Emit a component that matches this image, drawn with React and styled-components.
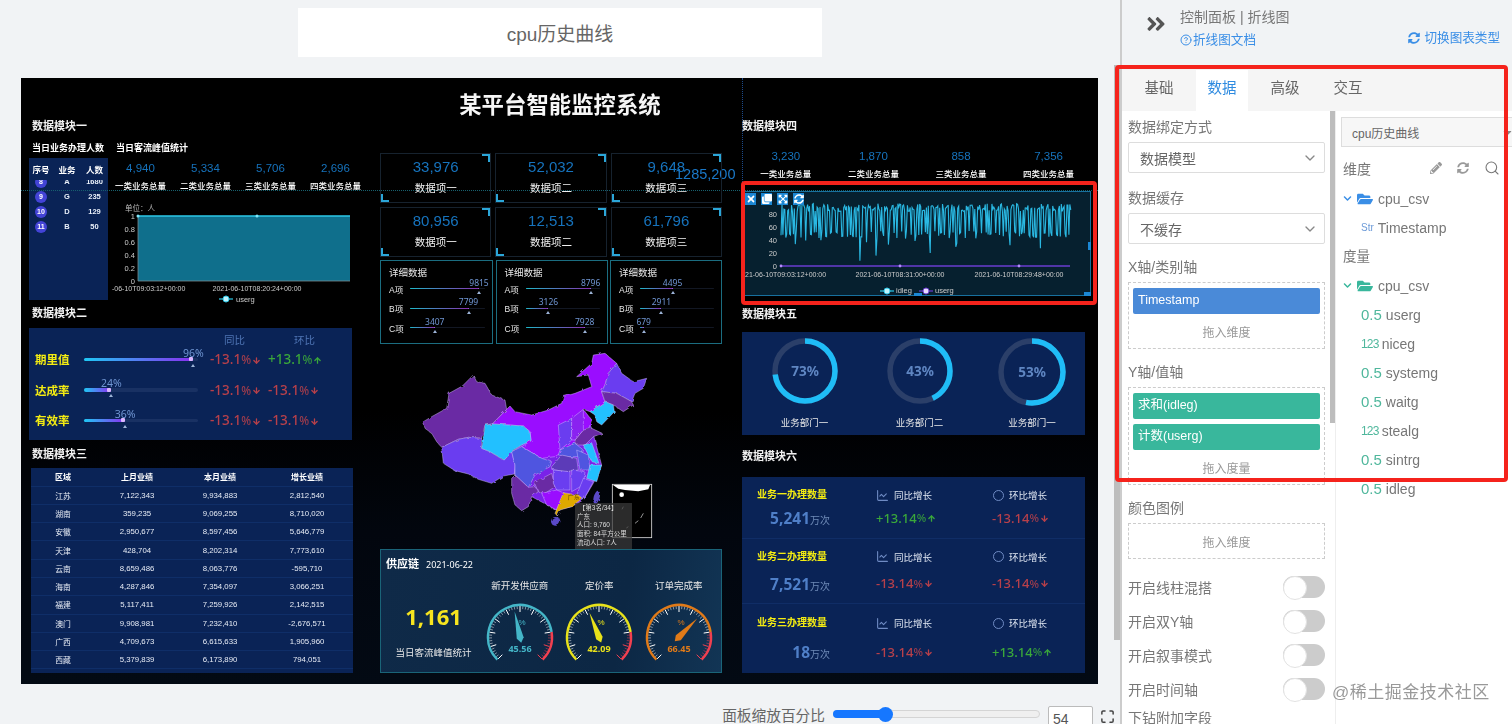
import React from "react";
import styled, { createGlobalStyle } from "styled-components";
import { ArrowDown, ArrowUp, ChartLine, ChevronDown, CircleHelp, Maximize, Search } from "lucide-react";
import { FaAngleDoubleRight, FaChevronDown, FaClone, FaExpandArrowsAlt, FaFolderOpen, FaPencilAlt, FaSyncAlt, FaTimes, FaCaretDown } from "react-icons/fa";

const Global = createGlobalStyle`
  html, body { margin: 0; padding: 0; background: #f1f3f5; }
  body { font-family: "Liberation Sans", "Noto Sans CJK SC", sans-serif; }
  * { box-sizing: border-box; }
`;

const Root = styled.div`
  position: relative; display: flex; width: 1512px; height: 724px; overflow: hidden; background: #f1f3f5;
`;
const Main = styled.div`
  width: 1120px; flex: none; padding-left: 21px; display: flex; flex-direction: column;
`;
const TitleBar = styled.div`
  flex: none; width: 524px; height: 49px; margin: 8px 0 21px 277px; background: #fff;
  display: flex; align-items: center; justify-content: center; color: #666; font-size: 19px;
`;
const Canvas = styled.div`
  position: relative; flex: none; width: 1077px; height: 606px; overflow: hidden;
  background: linear-gradient(#000 0 55%, #02060e 75%, #030a14 100%);
  color: #fff; display: grid; grid-template-columns: 323px 369px 1fr;
  padding-left: 9px; filter: blur(0.35px);
`;
const GuideH = styled.div`
  position: absolute; left: 0; right: 0; top: 112px; border-top: 1px dotted #17606e;
`;
const GuideV = styled.div`
  position: absolute; left: 721px; top: 0; height: 112px; border-left: 1px dotted #1c4a8a;
`;
const GuideLabel = styled.div`
  position: absolute; left: 654px; top: 88px; color: #1a78c8; font-size: 14.5px;
`;
const Column = styled.div`
  display: flex; flex-direction: column; padding-top: 40px; min-width: 0;
`;
const MidColumn = styled(Column)`
  margin-left: 27px; padding-top: 10px; width: 342px;
`;
const RightColumn = styled(Column)`
  margin-left: 20px; width: 343px;
`;
const Heading = styled.div`
  flex: none; height: 16px; line-height: 16px; font-size: 11px; font-weight: 700; color: #f2f2f2;
  margin-top: ${(p) => p.$mt || 0}px; padding-left: ${(p) => p.$pl || 0}px;
`;
const SubRow = styled.div`
  display: flex; gap: 12px; margin-top: 6px; height: 16px; line-height: 16px; font-size: 9px; font-weight: 700; padding-left: 2px;
`;
const TopRow = styled.div`
  display: flex; margin: 2px 0 0 -1px; height: 142px; width: 324px;
`;
const MiniTable = styled.div`
  width: 79px; flex: none; background: #0a2356; overflow: hidden;
`;
const MiniRowBase = styled.div`
  display: grid; grid-template-columns: 24px 28px 27px; align-items: center; justify-items: center;
`;
const MiniHead = styled(MiniRowBase)`
  height: 22px; font-size: 8.5px; font-weight: 700; background: #0a2356; position: relative; z-index: 1;
`;
const MiniRow = styled(MiniRowBase)`
  height: 15px; font-size: 7.5px; font-weight: 700; color: #e8eef8;
`;
const MiniBody = styled.div`
  margin-top: -6px;
`;
const Badge = styled.span`
  width: 12px; height: 12px; border-radius: 50%; background: #4343d6; color: #fff; display: flex; align-items: center; justify-content: center; font-size: 7px;
`;
const TopRight = styled.div`
  flex: 1; min-width: 0; display: flex; flex-direction: column;
`;
const AreaSvg = styled.svg`
  display: block; flex: none; margin-top: 1px;
`;
const Stats = styled.div`
  display: grid; grid-template-columns: repeat(4, ${(p) => p.$w}px); flex: none;
  margin-top: ${(p) => p.$mt || 0}px;
`;
const Stat = styled.div`
  text-align: center; display: flex; flex-direction: column; align-items: center;
`;
const StatNum = styled.span`
  font-size: 11.5px; line-height: 16px; color: #1673bd;
`;
const StatLabel = styled.span`
  margin-top: 3px; font-size: 8.5px; line-height: 14px; white-space: nowrap; color: #fff; font-weight: 500;
`;
const DarkPanel = styled.div`
  flex: none; background: #0a2356; margin-top: ${(p) => p.$mt || 0}px; width: ${(p) => p.$w || 343}px; height: ${(p) => p.$h}px;
  margin-left: ${(p) => p.$ml || 0}px;
`;
const RateGrid = styled.div`
  display: grid; grid-template-columns: 49px 114px 70px 1fr; align-items: center; padding-left: 6px;
`;
const RateHead = styled(RateGrid)`
  height: 20px; padding-top: 2px; margin-bottom: -4px; color: #4f74b4; font-size: 10.5px;
  & > span:nth-child(3), & > span:nth-child(4) { padding-left: 26px; }
`;
const RateRow = styled(RateGrid)`
  height: 30.5px;
`;
const RateName = styled.span`
  color: #f4ec12; font-size: 11.5px; font-weight: 700;
`;
const DeltaSlot = styled.span`
  padding-left: ${(p) => p.$pl || 0}px;
`;
const TrackWrap = styled.div`
  position: relative; height: ${(p) => p.$t}px; background: rgba(70, 90, 140, 0.25); border-radius: 2px;
`;
const TrackFill = styled.div`
  position: absolute; left: 0; top: 0; bottom: 0; width: ${(p) => p.$pct}%; border-radius: 2px;
  background: linear-gradient(90deg, ${(p) => p.$from}, ${(p) => p.$to});
  &::after {
    content: ""; position: absolute; right: 0; top: 50%; width: ${(p) => p.$dot}px; height: ${(p) => p.$dot}px;
    margin-top: -${(p) => p.$dot / 2}px; border-radius: 1px; background: ${(p) => p.$dotColor};
  }
`;
const TrackValue = styled.span`
  position: absolute; left: ${(p) => p.$pct}%; bottom: ${(p) => p.$b}px; transform: translateX(-50%);
  color: #6f95d2; font-size: ${(p) => p.$fs}px; line-height: 1; white-space: nowrap; font-family: "Noto Sans", sans-serif;
`;
const TrackMark = styled.span`
  position: absolute; left: ${(p) => p.$pct}%; top: ${(p) => p.$t}px; margin-left: -2px; width: 0; height: 0;
  border-left: 2.5px solid transparent; border-right: 2.5px solid transparent; border-bottom: 3px solid #9db4d8;
`;
const DeltaText = styled.span`
  display: inline-flex; align-items: center; color: ${(p) => (p.$up ? "#3aa83a" : "#b8404a")};
  font-family: "Noto Sans", sans-serif; font-weight: 500; font-size: ${(p) => p.$fs}px; line-height: 1; white-space: nowrap;
  small { font-size: 0.86em; opacity: 0.85; }
  svg { margin-left: 1px; }
`;
const TableWrap = styled.div`
  flex: none; width: 322px; height: 205px; margin: 6px 0 0 1px; background: #0a2356;
`;
const TableRow = styled.div`
  display: grid; grid-template-columns: 64px 84px 82px 92px; height: ${(p) => (p.$head ? 18.5 : 18.3)}px;
  align-items: center; justify-items: center; font-size: ${(p) => (p.$head ? 8 : 7.8)}px;
  font-weight: ${(p) => (p.$head ? 700 : 400)}; color: ${(p) => (p.$head ? "#fff" : "#e6ebf5")};
  border-bottom: 1px solid #0f2e68;
`;
const Title = styled.div`
  flex: none; height: 36px; line-height: 36px; padding-left: 18px; text-align: center; font-size: 22.4px; font-weight: 700; color: #f6f6f6;
`;
const CardGrid = styled.div`
  display: grid; grid-template-columns: repeat(3, 1fr); column-gap: 4px; row-gap: 4px; margin-top: 29px;
`;
const Card = styled.div`
  position: relative; height: 50px; border: 1px solid #16222e; text-align: center; padding-top: 4px;
  &::before {
    content: ""; position: absolute; right: 0; top: 0; width: 6px; height: 6px; border-top: 2px solid #2ba6d8; border-right: 2px solid #2ba6d8;
  }
  &::after {
    content: ""; position: absolute; left: 0; bottom: 0; width: 6px; height: 6px; border-bottom: 2px solid #2ba6d8; border-left: 2px solid #2ba6d8;
  }
`;
const CardNum = styled.div`
  font-size: 15px; line-height: 18px; color: #1673bd;
`;
const CardLabel = styled.div`
  font-size: 10.5px; line-height: 16px; margin-top: 4px; color: #f0f0f0;
`;
const DetailGrid = styled.div`
  display: grid; grid-template-columns: 113px 112px 112px; column-gap: 2.5px; margin-top: 3px;
`;
const Detail = styled.div`
  height: 84px; border: 1px solid #1b6d80; padding: 6px 7px 0 8px;
`;
const DetailTitle = styled.div`
  font-size: 9.5px; line-height: 12px; color: #e8e8e8;
`;
const DetailRow = styled.div`
  display: grid; grid-template-columns: 21px 1fr; align-items: center; height: 19.5px; font-size: 8.5px; color: #e8e8e8;
`;
const MapWrap = styled.div`
  position: relative; flex: none; height: 194px; margin-top: 6px;
`;
const MapSvg = styled.svg`
  display: block; width: 342px; height: 194px;
`;
const Tip = styled.div`
  position: absolute; left: 195px; top: 153px; width: 57px; height: 46px; overflow: hidden; background: rgba(60, 60, 60, 0.72);
  color: #ddd; font-size: 6.5px; line-height: 8.7px; padding: 1px 2px; white-space: nowrap;
`;
const Supply = styled.div`
  position: relative; flex: none; width: 342px; height: 124px; margin-top: 5px;
  background: linear-gradient(100deg, #0f2a48, #0c2744 70%, #123555);
  border: 1px solid #1a6478;
`;
const SupplyHead = styled.div`
  display: flex; align-items: baseline; gap: 7px; height: 25px; padding: 5px 0 0 5px;
  font-size: 11px; font-weight: 700;
  span { font-size: 9px; font-weight: 400; font-family: "Noto Sans", sans-serif; }
`;
const SupplyBody = styled.div`
  display: grid; grid-template-columns: 99px repeat(3, 79.5px);
`;
const BigStat = styled.div`
  display: flex; flex-direction: column; align-items: center; padding: 26px 0 0 6px;
`;
const BigNum = styled.div`
  color: #f7e51f; font-family: "Noto Sans", sans-serif; font-weight: 700; font-size: 22px; line-height: 30px;
`;
const BigLabel = styled.div`
  margin-top: 15px; font-size: 9.5px; line-height: 14px; white-space: nowrap; color: #e8e8e8;
`;
const GaugeCell = styled.div`
  display: flex; flex-direction: column; align-items: center;
`;
const GaugeLabel = styled.div`
  height: 22px; line-height: 22px; font-size: 9.5px; color: #e8e8e8; white-space: nowrap;
`;
const ChartBox = styled.div`
  position: relative; flex: none; width: 348px; height: 105px; margin: 10px 0 0 1px;
  background: #06202f; border: 1px solid #17709e;
`;
const ChartSvg = styled.svg`
  display: block; position: absolute; left: -1px; top: -1px; width: 348px; height: 105px;
`;
const ToolRow = styled.div`
  position: absolute; left: 1px; top: 1px; display: flex; gap: 5px; z-index: 1;
`;
const ToolBtn = styled.span`
  width: 11px; height: 12px; background: #1b87d4; color: #fff; display: flex; align-items: center; justify-content: center;
`;
const Handle = styled.span`
  position: absolute; background: #1b87d4; width: ${(p) => p.$w}px; height: ${(p) => p.$h}px;
  ${(p) => p.$pos}
`;
const Highlight = styled.div`
  position: absolute; border: 4px solid #f5231c; border-radius: 4px; pointer-events: none; z-index: 3;
  left: ${(p) => p.$l}px; top: ${(p) => p.$t}px; width: ${(p) => p.$w}px; height: ${(p) => p.$h}px;
`;
const DonutGrid = styled.div`
  display: grid; grid-template-columns: 115px 115px 110px; padding: 6px 0 0 5px;
`;
const DonutCell = styled.div`
  display: flex; flex-direction: column; align-items: center; height: 92px;
`;
const DonutLabel = styled.div`
  margin-top: auto; font-size: 9.5px; line-height: 14px; color: #e8e8e8;
`;
const BizRow = styled.div`
  display: grid; grid-template-columns: 134px 116px 1fr; align-content: center; row-gap: ${(p) => p.$gap}px;
  height: ${(p) => p.$h}px; border-bottom: ${(p) => (p.$last ? 0 : "1px solid #102d66")};
`;
const BizName = styled.div`
  padding-left: 15px; height: 16px; line-height: 16px; color: #f4ec12; font-weight: 700; font-size: 10px; white-space: nowrap;
`;
const BizNum = styled.div`
  width: 88px; height: 20px; text-align: right; white-space: nowrap; color: #4f7fc8; font-family: "Noto Sans", sans-serif; font-weight: 700; font-size: 15.5px; line-height: 20px;
  small { font-family: "Liberation Sans", "Noto Sans CJK SC", sans-serif; font-weight: 400; font-size: 10px; color: #6f8bb8; }
`;
const BizHead = styled.div`
  display: flex; align-items: center; gap: ${(p) => p.$gap}px; height: 16px; font-size: 9.5px; color: #dfe6f2; margin-left: ${(p) => p.$ml || 0}px;
`;
const Ring = styled.span`
  width: 11px; height: 11px; border-radius: 50%; border: 1.5px solid #6f8bc4; flex: none;
`;
const DeltaCell = styled.div`
  height: 20px; display: flex; align-items: center;
`;
const BottomRow = styled.div`
  flex: 1; display: flex; justify-content: flex-end; align-items: flex-start; padding: 22px 5px 0 0; color: #666; font-size: 14.7px; line-height: 20px;
`;
const SliderTrack = styled.div`
  position: relative; width: 207px; height: 8px; margin: 4px 8px 0 8px; border: 1px solid #d4d4d4; border-radius: 4px; background: #efefef;
`;
const SliderFill = styled.div`
  position: absolute; left: -1px; top: -1px; bottom: -1px; width: 25%; background: #1677ff; border-radius: 4px;
`;
const SliderKnob = styled.span`
  position: absolute; left: 25%; top: 50%; width: 15px; height: 15px; margin: -7.5px 0 0 -7.5px; background: #1677ff; border-radius: 50%;
`;
const ValueBox = styled.div`
  width: 45px; height: 30px; border: 1px solid #bbb; border-radius: 2px; background: #fff; padding: 2px 0 0 4px; color: #555; font-size: 14px;
`;
const FullBtn = styled.span`
  margin: 3px 0 0 7px; color: #444; display: flex;
`;
const Panel = styled.div`
  position: relative; flex: 1; min-width: 0; border-left: 2px solid #ccc; display: flex; flex-direction: column; filter: blur(0.25px);
`;
const OuterThumb = styled.div`
  position: absolute; left: -8px; top: 65px; width: 6px; height: 575px; background: #bdbdbd;
`;
const PanelHead = styled.div`
  flex: none; height: 70px; display: flex; padding-left: 23px; color: #777;
`;
const ChevronBox = styled.div`
  color: #555; padding-top: 13px; width: 35px; font-size: 22px; line-height: 0;
`;
const HeadText = styled.div`
  padding-top: 7px; font-size: 14px; line-height: 20px;
`;
const LinkText = styled.div`
  display: flex; align-items: center; color: #3a8ee6; font-size: 12.6px; line-height: 20px; gap: 1px; margin-top: 3px;
  white-space: nowrap;
`;
const SwitchLink = styled(LinkText)`
  margin: 28px 0 0 auto; padding-right: 12px; gap: 4px; height: 20px;
`;
const Tabs = styled.div`
  flex: none; height: 41px; background: #f5f5f5; display: flex; gap: 11px; padding-left: 11px;
`;
const Tab = styled.div`
  width: 52px; text-align: center; line-height: 37px; font-size: 14.5px;
  color: ${(p) => (p.$active ? "#2f8be0" : "#666")}; background: ${(p) => (p.$active ? "#fff" : "transparent")};
`;
const PanelBody = styled.div`
  flex: 1; min-height: 0; display: grid; grid-template-columns: 213px 1fr; background: #fff; overflow: hidden;
`;
const FormCol = styled.div`
  position: relative; padding: 4px 10px 0 6px; color: #777;
`;
const FormThumb = styled.div`
  position: absolute; right: 0; top: 0; width: 5px; height: 312px; background: #bdbdbd;
`;
const FieldLabel = styled.div`
  height: 24px; line-height: 24px; font-size: 14px; color: #777; white-space: nowrap; margin: ${(p) => p.$mt}px 0 3px;
`;
const SelectBox = styled.div`
  height: 31px; border: 1px solid #ddd; border-radius: 2px; display: flex; align-items: center; justify-content: space-between;
  padding: 0 6px 0 11px; font-size: 14px; color: #666;
`;
const Drop = styled.div`
  border: 1px dashed #ccc; padding: 5px 4px 0; display: flex; flex-direction: column; gap: 5px;
`;
const Chip = styled.div`
  height: 26px; line-height: 25px; background: ${(p) => p.$bg}; color: #fff; padding-left: 5px; font-size: 12.5px; border-radius: 2px;
`;
const DropHint = styled.div`
  height: 34px; margin-top: -5px; display: flex; align-items: center; justify-content: center; font-size: 12px; color: #999;
`;
const ToggleList = styled.div`
  margin-top: 11px;
`;
const ToggleRow = styled.div`
  height: 34px; display: flex; align-items: center; justify-content: space-between; font-size: 14px; color: #777;
`;
const Toggle = styled.span`
  position: relative; width: 42px; height: 22px; background: #ccc; border-radius: 11px;
  &::after {
    content: ""; position: absolute; left: 0; top: 0; width: 22px; height: 22px; background: #fff; border: 1px solid #e2e2e2; border-radius: 50%;
  }
`;
const ExtraLabel = styled.div`
  font-size: 14px; line-height: 24px; color: #777;
`;
const TreeCol = styled.div`
  border-left: 1px solid #eee; padding: 6px 0 0 5px; min-width: 0; overflow: hidden;
`;
const SourceSelect = styled.div`
  width: 180px; height: 30px; border: 1px solid #ddd; display: flex; align-items: center; justify-content: space-between; padding: 0 6px 0 10px;
  font-size: 12px; color: #666; background: #f7f7f7;
`;
const SectionRow = styled.div`
  display: flex; align-items: center; height: 20px; margin: 11px 0 6px; font-size: 14px; color: #777; padding-left: 2px;
`;
const SectionTools = styled.div`
  margin-left: 59px; display: flex; align-items: center; gap: 15px; color: #999;
`;
const SectionTitle = styled.div`
  height: 29px; line-height: 29px; font-size: 13.5px; color: #777; padding-left: 2px;
`;
const TreeRow = styled.div`
  height: 29px; display: flex; align-items: center; font-size: 14px; color: #777; padding-left: ${(p) => p.$pl}px; gap: ${(p) => p.$gap}px; white-space: nowrap;
`;
const TypeTag = styled.span`
  color: ${(p) => p.$c}; font-size: ${(p) => p.$fs}px; letter-spacing: ${(p) => p.$ls || 0}px;
`;
const Watermark = styled.div`
  position: absolute; left: 1332px; top: 683px; color: #999; font-size: 17px; line-height: 20px; letter-spacing: 0.5px; white-space: nowrap; z-index: 2;
`;
const SvgText = styled.text`
  font-family: "Liberation Sans", "Noto Sans CJK SC", sans-serif; fill: ${(p) => p.$c || "#bbb"}; font-size: ${(p) => p.$fs || 8}px;
`;
const SvgValue = styled(SvgText)`
  font-family: "Noto Sans", sans-serif; font-weight: 700;
`;

function Delta({ up, v, fs = 13.5, arrow = 9 }) {
  const Ico = up ? ArrowUp : ArrowDown;
  return (
    <DeltaText $up={up} $fs={fs}>
      {up ? "+" : "-"}{v}<small>%</small>
      <Ico size={arrow} strokeWidth={3.5} />
    </DeltaText>
  );
}

function Track({ pct, value, thick, dot, from, to, dotColor, fs, bottom, mark }) {
  return (
    <TrackWrap $t={thick}>
      <TrackFill $pct={pct} $from={from} $to={to} $dot={dot} $dotColor={dotColor} />
      <TrackValue $pct={pct} $b={bottom} $fs={fs}>{value}</TrackValue>
      <TrackMark $pct={pct} $t={mark} />
    </TrackWrap>
  );
}

const polar = (r, t) => {
  const a = ((225 - 270 * t) * Math.PI) / 180;
  return [r * Math.cos(a), -r * Math.sin(a)];
};
const arc = (r, t0, t1) => {
  const [x0, y0] = polar(r, t0);
  const [x1, y1] = polar(r, t1);
  return `M${x0} ${y0}A${r} ${r} 0 ${t1 - t0 > 2 / 3 ? 1 : 0} 1 ${x1} ${y1}`;
};

function Gauge({ v, color }) {
  const t = v / 100;
  const [tx, ty] = polar(26, t);
  const [bx, by] = polar(-6, t);
  const [mx, my] = polar(-1, t);
  const [dx, dy] = polar(1, t);
  const points = `${tx},${ty} ${mx - dy * 3.5},${my + dx * 3.5} ${bx},${by} ${mx + dy * 3.5},${my - dx * 3.5}`;
  const ticks = [];
  for (let i = 0; i <= 50; i++) {
    const major = i % 5 === 0;
    const a = polar(major ? 25 : 28, i / 50);
    const b = polar(31, i / 50);
    ticks.push(
      <line key={i} x1={a[0]} y1={a[1]} x2={b[0]} y2={b[1]} stroke={i / 50 > 0.8 ? "#f04050" : "#fff"} strokeWidth={major ? 1 : 0.5} />
    );
  }
  return (
    <svg width="80" height="76" viewBox="-40 -40 80 76">
      {ticks}
      <path d={arc(32, 0, 0.8)} stroke={color} strokeWidth="2.4" fill="none" />
      <path d={arc(32, 0.8, 1)} stroke="#f04050" strokeWidth="2.4" fill="none" />
      <polygon points={points} fill={color} />
      <SvgText x="2" y="-12" textAnchor="middle" $c={color} $fs={8}>%</SvgText>
      <SvgValue x="0" y="15" textAnchor="middle" $c={color} $fs={9}>{v.toFixed(2)}</SvgValue>
    </svg>
  );
}

function Donut({ pct, size }) {
  const r = size / 2 - 3;
  const c = 2 * Math.PI * r;
  return (
    <svg width={size} height={size} viewBox={`0 0 ${size} ${size}`}>
      <circle cx={size / 2} cy={size / 2} r={r} fill="none" stroke="#2b3f69" strokeWidth="5.5" />
      <circle
        cx={size / 2} cy={size / 2} r={r} fill="none" stroke="#1fbdf7" strokeWidth="5.5"
        strokeDasharray={`${(c * pct) / 100} ${c}`} transform={`rotate(-90 ${size / 2} ${size / 2})`}
      />
      <SvgValue x={size / 2} y={size / 2 + 5} textAnchor="middle" $c="#5f86c2" $fs={13.5}>{pct}%</SvgValue>
    </svg>
  );
}

function makeSeries() {
  let s = 11;
  const rnd = () => {
    s = (s * 16807) % 2147483647;
    return s / 2147483647;
  };
  const pts = [];
  let x = 781;
  let hold = 0;
  let low = false;
  while (x < 1071) {
    if (hold <= 0) {
      low = !low;
      hold = low ? 1 + Math.floor(rnd() * 2) : 1 + Math.floor(rnd() * 4);
    }
    hold--;
    let v = low ? 42 + rnd() * 12 : 84 + rnd() * 12;
    if (low && rnd() < 0.1) v = 24 + rnd() * 16;
    if (Math.abs(x - 860) < 0.6) v = 8;
    if (Math.abs(x - 876) < 0.6) v = 16;
    if (Math.abs(x - 930) < 0.6) v = 20;
    pts.push(`${x.toFixed(1)},${(265 - v * 0.65).toFixed(1)}`);
    x += 0.95;
  }
  return pts.join(" ");
}
const series = makeSeries();

const TABLE = [
  ["江苏", "7,122,343", "9,934,883", "2,812,540"],
  ["湖南", "359,235", "9,069,255", "8,710,020"],
  ["安徽", "2,950,677", "8,597,456", "5,646,779"],
  ["天津", "428,704", "8,202,314", "7,773,610"],
  ["云南", "8,659,486", "8,063,776", "-595,710"],
  ["海南", "4,287,846", "7,354,097", "3,066,251"],
  ["福建", "5,117,411", "7,259,926", "2,142,515"],
  ["澳门", "9,908,981", "7,232,410", "-2,676,571"],
  ["广西", "4,709,673", "6,615,633", "1,905,960"],
  ["西藏", "5,379,839", "6,173,890", "794,051"],
];
const DETAILS = [
  [["A项", 92, "9815"], ["B项", 78, "7799"], ["C项", 33, "3407"]],
  [["A项", 88, "8796"], ["B项", 31, "3126"], ["C项", 80, "7928"]],
  [["A项", 44, "4495"], ["B项", 29, "2911"], ["C项", 5, "679"]],
];
const CARDS = [
  ["33,976", "数据项一"], ["52,032", "数据项二"], ["9,648", "数据项三"],
  ["80,956", "数据项一"], ["12,513", "数据项二"], ["61,796", "数据项三"],
];
const PROVINCES = [
  ["#7a20e8", "470,240 625,178 650,235 680,345 655,400 625,450 590,470 545,480 470,440 418,372 410,305 440,285"],
  ["#6a2aa4", "145,215 170,200 215,175 222,130 262,108 295,75 305,95 330,100 350,135 390,150 395,178 352,222 330,225 320,265 280,262 250,268 200,292 185,275 170,250 150,235"],
  ["#6a3cf0", "200,292 250,268 280,262 320,265 320,295 345,305 385,330 410,305 420,345 418,372 385,378 350,400 310,388 280,372 240,362 205,340"],
  ["#9a10ff", "352,222 395,178 405,168 420,185 470,195 520,180 560,160 565,140 600,130 650,110 640,75 605,80 650,40 655,15 690,10 725,40 700,70 690,105 680,125 690,155 645,185 625,178 650,210 640,240 600,280 540,320 500,325 440,290 468,272 465,245 445,228 400,225"],
  ["#22c0ff", "330,226 352,222 400,225 445,228 465,245 468,272 440,285 415,300 388,330 345,305 320,295 325,265"],
  ["#6a3cf0", "725,40 740,70 775,95 815,85 805,115 780,130 770,155 725,130 680,125 690,105 700,70"],
  ["#6a2aa4", "680,125 725,130 770,155 775,165 745,185 715,165 690,155"],
  ["#22c0ff", "645,185 690,155 715,165 718,185 680,225 665,215 660,195"],
  ["#6a2aa4", "600,270 625,240 650,235 682,250 655,260 630,285 605,285"],
  ["#6a3cf0", "550,225 590,205 590,270 555,300"],
  ["#8a20f0", "590,205 625,178 625,240 600,270 590,270"],
  ["#4f55e0", "555,300 600,280 625,300 620,320 580,320 550,315"],
  ["#22c0ff", "625,285 650,278 672,340 650,335 640,315"],
  ["#4f55e0", "605,300 640,315 645,360 615,360"],
  ["#22c0ff", "645,345 680,345 665,395 635,385"],
  ["#5c3ab8", "530,350 560,315 605,325 610,360 570,365 530,358"],
  ["#4f55e0", "410,305 440,290 500,325 530,335 525,350 480,375 460,412 420,375 420,345"],
  ["#6a2aa4", "410,385 420,375 460,412 480,410 490,425 470,440 460,470 440,482 420,465 410,430"],
  ["#6a2aa4", "478,398 530,370 540,410 510,430 490,425"],
  ["#6a3cf0", "535,360 585,365 585,420 545,420 535,400"],
  ["#6a3cf0", "590,360 630,365 625,405 590,425"],
  ["#6a3cf0", "625,385 655,395 625,450 605,435"],
  ["#9a10ff", "500,430 545,420 570,430 545,480 515,465"],
  ["#dfa800", "565,428 610,435 622,445 590,470 555,480 547,498 540,490 550,465"],
];

const BIZ = [
  { h: 62, gap: 5, name: "业务一办理数量", num: "5,241", a: [true, "13.14"], b: [false, "13.14"] },
  { h: 65, gap: 9, name: "业务二办理数量", num: "7,521", a: [false, "13.14"], b: [false, "13.14"] },
  { h: 69, gap: 11, name: "业务三办理数量", num: "18", a: [false, "13.14"], b: [true, "13.14"], last: true },
];

const BLUE = { from: "#1fc8f5", to: "#8a2ff0" };

export default function App() {
  return (
    <Root>
      <Global />
      <Main>
        <TitleBar>cpu历史曲线</TitleBar>
        <Canvas>
          <GuideH />
          <GuideV />
          <GuideLabel>1285,200</GuideLabel>

          <Column>
            <Heading $pl={2}>数据模块一</Heading>
            <SubRow><span>当日业务办理人数</span><span>当日客流峰值统计</span></SubRow>
            <TopRow>
              <MiniTable>
                <MiniHead><span>序号</span><span>业务</span><span>人数</span></MiniHead>
                <MiniBody>
                  {[[8, "A", "1680"], [9, "G", "235"], [10, "D", "129"], [11, "B", "50"]].map((r) => (
                    <MiniRow key={r[0]}><Badge>{r[0]}</Badge><span>{r[1]}</span><span>{r[2]}</span></MiniRow>
                  ))}
                </MiniBody>
              </MiniTable>
              <TopRight>
                <Stats $w={65} $mt={2}>
                  {[["4,940", "一类业务总量"], ["5,334", "二类业务总量"], ["5,706", "三类业务总量"], ["2,696", "四类业务总量"]].map((s) => (
                    <Stat key={s[0]}><StatNum>{s[0]}</StatNum><StatLabel>{s[1]}</StatLabel></Stat>
                  ))}
                </Stats>
                <AreaSvg width="245" height="111" viewBox="108 193 245 111">
                  <rect x="138" y="215" width="212" height="65" fill="#0f6f8c" />
                  <line x1="138" y1="215" x2="350" y2="215" stroke="#2cc8e8" strokeWidth="1.4" />
                  <line x1="138" y1="280" x2="350" y2="280" stroke="#7a8a90" strokeWidth="0.8" />
                  <line x1="138" y1="215" x2="138" y2="280" stroke="#7a8a90" strokeWidth="0.8" />
                  <circle cx="138" cy="215" r="1.5" fill="#7fe6f8" />
                  <circle cx="257" cy="215" r="1.5" fill="#7fe6f8" />
                  <SvgText x="125" y="210" $fs={7.5}>单位：人</SvgText>
                  {[["1", 218], ["0.8", 231], ["0.6", 244], ["0.4", 257], ["0.2", 270], ["0", 283]].map((t) => (
                    <SvgText key={t[0]} x="135" y={t[1]} textAnchor="end" $fs={7.5} $c="#ccc">{t[0]}</SvgText>
                  ))}
                  <SvgText x="112" y="290" $fs={7} $c="#ccc">-06-10T09:03:12+00:00</SvgText>
                  <SvgText x="257" y="290" textAnchor="middle" $fs={7} $c="#ccc">2021-06-10T08:20:24+00:00</SvgText>
                  <line x1="219" y1="298" x2="233" y2="298" stroke="#2cc8e8" strokeWidth="1.2" />
                  <circle cx="226" cy="298" r="3" fill="#bff3fc" stroke="#2cc8e8" />
                  <SvgText x="236" y="300.5" $fs={7.5} $c="#ccc">userg</SvgText>
                </AreaSvg>
              </TopRight>
            </TopRow>

            <Heading $mt={5} $pl={2}>数据模块二</Heading>
            <DarkPanel $mt={7} $w={323} $h={112} $ml={-1}>
              <RateHead><span /><span /><span>同比</span><span>环比</span></RateHead>
              {[
                ["期里值", 96, true],
                ["达成率", 24, false],
                ["有效率", 36, false],
              ].map((r) => (
                <RateRow key={r[0]}>
                  <RateName>{r[0]}</RateName>
                  <Track pct={r[1]} value={`${r[1]}%`} thick={3.5} dot={4} dotColor="#d9b8ff" from={BLUE.from} to={BLUE.to} fs={10.5} bottom={3} mark={6} />
                  <DeltaSlot $pl={12}><Delta v="13.1" /></DeltaSlot>
                  <DeltaSlot><Delta v="13.1" up={r[2]} /></DeltaSlot>
                </RateRow>
              ))}
            </DarkPanel>

            <Heading $mt={6} $pl={2}>数据模块三</Heading>
            <TableWrap>
              <TableRow $head><span>区域</span><span>上月业绩</span><span>本月业绩</span><span>增长业绩</span></TableRow>
              {TABLE.map((r) => (
                <TableRow key={r[0]}>{r.map((c, i) => <span key={i}>{c}</span>)}</TableRow>
              ))}
            </TableWrap>
          </Column>

          <MidColumn>
            <Title>某平台智能监控系统</Title>
            <CardGrid>
              {CARDS.map((c) => (
                <Card key={c[0]}><CardNum>{c[0]}</CardNum><CardLabel>{c[1]}</CardLabel></Card>
              ))}
            </CardGrid>
            <DetailGrid>
              {DETAILS.map((d, i) => (
                <Detail key={i}>
                  <DetailTitle>详细数据</DetailTitle>
                  {d.map((r) => (
                    <DetailRow key={r[0]}>
                      <span>{r[0]}</span>
                      <Track pct={r[1]} value={r[2]} thick={1} dot={1} dotColor="#b060f0" from="#1fb8c8" to="#8a2fb0" fs={8.5} bottom={2} mark={3} />
                    </DetailRow>
                  ))}
                </Detail>
              ))}
            </DetailGrid>
            <MapWrap>
              <MapSvg viewBox="15 0 1026 582">
                <defs>
                  <filter id="rough" x="-5%" y="-5%" width="110%" height="110%">
                    <feTurbulence type="fractalNoise" baseFrequency="0.07" numOctaves="2" seed="4" />
                    <feDisplacementMap in="SourceGraphic" scale="9" />
                  </filter>
                </defs>
                <g filter="url(#rough)">
                  {PROVINCES.map((p, i) => (
                    <polygon key={i} points={p[1]} fill={p[0]} stroke="#d8c8ff" strokeWidth="1.3" strokeLinejoin="round" />
                  ))}
                  <ellipse cx="542" cy="514" rx="14" ry="13" fill="#5a4ac8" />
                  <ellipse cx="665" cy="442" rx="9" ry="20" fill="#5a4ac8" transform="rotate(15 665 442)" />
                </g>
                <rect x="712" y="403" width="118" height="160" fill="#000" stroke="#ddd" strokeWidth="2.5" />
                <path d="M714 405H825L820 418 790 424 750 420 730 416Z" fill="#fff" />
                <circle cx="740" cy="434" r="7" fill="#fff" />
                <path d="M805 490l-8 14M790 512l-10 8M760 530l-6 4M745 470l-4 8" stroke="#ddd" strokeWidth="2" fill="none" />
                <SvgText x="578" y="446" $c="#6a4a00" $fs={18}>广东</SvgText>
              </MapSvg>
              <Tip>
                &nbsp;【第3名/34】<br />广东<br />人口: 9,760<br />面积: 84平方公里<br />流动人口: 7人
              </Tip>
            </MapWrap>
            <Supply>
              <SupplyHead>供应链<span>2021-06-22</span></SupplyHead>
              <SupplyBody>
                <BigStat>
                  <BigNum>1,161</BigNum>
                  <BigLabel>当日客流峰值统计</BigLabel>
                </BigStat>
                <GaugeCell><GaugeLabel>新开发供应商</GaugeLabel><Gauge v={45.56} color="#44b6c8" /></GaugeCell>
                <GaugeCell><GaugeLabel>定价率</GaugeLabel><Gauge v={42.09} color="#e8e21a" /></GaugeCell>
                <GaugeCell><GaugeLabel>订单完成率</GaugeLabel><Gauge v={66.45} color="#e07a18" /></GaugeCell>
              </SupplyBody>
            </Supply>
          </MidColumn>

          <RightColumn>
            <Heading>数据模块四</Heading>
            <Stats $w={87.6} $mt={14}>
              {[["3,230", "一类业务总量"], ["1,870", "二类业务总量"], ["858", "三类业务总量"], ["7,356", "四类业务总量"]].map((s) => (
                <Stat key={s[0]}><StatNum>{s[0]}</StatNum><StatLabel>{s[1]}</StatLabel></Stat>
              ))}
            </Stats>
            <ChartBox>
              <ToolRow>
                <ToolBtn><FaTimes size={10} /></ToolBtn>
                <ToolBtn><FaClone size={10} /></ToolBtn>
                <ToolBtn><FaExpandArrowsAlt size={10} /></ToolBtn>
                <ToolBtn><FaSyncAlt size={10} /></ToolBtn>
              </ToolRow>
              <ChartSvg viewBox="743 190 348 105">
                {[["80", 216], ["60", 229], ["40", 242], ["20", 255], ["0", 268]].map((t) => (
                  <SvgText key={t[0]} x="777" y={t[1]} textAnchor="end" $fs={7.5} $c="#ccc">{t[0]}</SvgText>
                ))}
                <polyline points={series} fill="none" stroke="#2ab8e2" strokeWidth="1.1" />
                <line x1="781" y1="265" x2="1070" y2="265" stroke="#6a3cd0" strokeWidth="1.4" />
                {[781, 900, 1019].map((x) => <circle key={x} cx={x} cy="265" r="1.4" fill="#b58cff" />)}
                <SvgText x="745" y="276" $fs={7} $c="#ccc">21-06-10T09:03:12+00:00</SvgText>
                <SvgText x="900" y="276" textAnchor="middle" $fs={7} $c="#ccc">2021-06-10T08:31:00+00:00</SvgText>
                <SvgText x="1019" y="276" textAnchor="middle" $fs={7} $c="#ccc">2021-06-10T08:29:48+00:00</SvgText>
                <line x1="880" y1="290" x2="894" y2="290" stroke="#2cc8e8" strokeWidth="1.2" />
                <circle cx="887" cy="290" r="3" fill="#bff3fc" stroke="#2cc8e8" />
                <SvgText x="896" y="292" $fs={7.5} $c="#ccc">idleg</SvgText>
                <line x1="919" y1="290" x2="933" y2="290" stroke="#6a3cd0" strokeWidth="1.2" />
                <circle cx="926" cy="290" r="3" fill="#e8dcff" stroke="#6a3cd0" />
                <SvgText x="935" y="292" $fs={7.5} $c="#ccc">userg</SvgText>
              </ChartSvg>
              <Handle $w={3} $h={8} $pos="right: -1px; top: 50px;" />
              <Handle $w={8} $h={3} $pos="left: 170px; bottom: -1px;" />
              <Handle $w={7} $h={4} $pos="right: -1px; bottom: -1px;" />
              <Highlight $l={-3} $t={-11} $w={356} $h={124} />
            </ChartBox>

            <Heading $mt={10}>数据模块五</Heading>
            <DarkPanel $mt={10} $h={103}>
              <DonutGrid>
                <DonutCell><Donut pct={73} size={66} /><DonutLabel>业务部门一</DonutLabel></DonutCell>
                <DonutCell><Donut pct={43} size={66} /><DonutLabel>业务部门二</DonutLabel></DonutCell>
                <DonutCell><Donut pct={53} size={68} /><DonutLabel>业务部门一</DonutLabel></DonutCell>
              </DonutGrid>
            </DarkPanel>

            <Heading $mt={13}>数据模块六</Heading>
            <DarkPanel $mt={13} $h={196}>
              {BIZ.map((b) => (
                <BizRow key={b.name} $h={b.h} $gap={b.gap} $last={b.last}>
                  <BizName>{b.name}</BizName>
                  <BizHead $gap={5}><ChartLine size={13} color="#6f8bc4" />同比增长</BizHead>
                  <BizHead $gap={5} $ml={1}><Ring />环比增长</BizHead>
                  <BizNum>{b.num}<small>万次</small></BizNum>
                  <DeltaCell><Delta up={b.a[0]} v={b.a[1]} fs={13} arrow={9} /></DeltaCell>
                  <DeltaCell><Delta up={b.b[0]} v={b.b[1]} fs={13} arrow={9} /></DeltaCell>
                </BizRow>
              ))}
            </DarkPanel>
          </RightColumn>
        </Canvas>
        <BottomRow>
          <span>面板缩放百分比</span>
          <SliderTrack><SliderFill /><SliderKnob /></SliderTrack>
          <ValueBox>54</ValueBox>
          <FullBtn><Maximize size={15} strokeWidth={2.4} /></FullBtn>
        </BottomRow>
      </Main>

      <Panel>
        <OuterThumb />
        <PanelHead>
          <ChevronBox><FaAngleDoubleRight /></ChevronBox>
          <HeadText>
            控制面板 | 折线图
            <LinkText><CircleHelp size={12} />折线图文档</LinkText>
          </HeadText>
          <SwitchLink><FaSyncAlt size={12} />切换图表类型</SwitchLink>
        </PanelHead>
        <Tabs>
          <Tab>基础</Tab>
          <Tab $active>数据</Tab>
          <Tab>高级</Tab>
          <Tab>交互</Tab>
        </Tabs>
        <PanelBody>
          <FormCol>
            <FormThumb />
            <FieldLabel $mt={0}>数据绑定方式</FieldLabel>
            <SelectBox>数据模型<ChevronDown size={16} color="#888" /></SelectBox>
            <FieldLabel $mt={13}>数据缓存</FieldLabel>
            <SelectBox>不缓存<ChevronDown size={16} color="#888" /></SelectBox>
            <FieldLabel $mt={11}>X轴/类别轴</FieldLabel>
            <Drop>
              <Chip $bg="#4a8ad8">Timestamp</Chip>
              <DropHint>拖入维度</DropHint>
            </Drop>
            <FieldLabel $mt={11}>Y轴/值轴</FieldLabel>
            <Drop>
              <Chip $bg="#39b79c">求和(idleg)</Chip>
              <Chip $bg="#39b79c">计数(userg)</Chip>
              <DropHint>拖入度量</DropHint>
            </Drop>
            <FieldLabel $mt={11}>颜色图例</FieldLabel>
            <Drop>
              <DropHint>拖入维度</DropHint>
            </Drop>
            <ToggleList>
              {["开启线柱混搭", "开启双Y轴", "开启叙事模式", "开启时间轴"].map((t) => (
                <ToggleRow key={t}>{t}<Toggle /></ToggleRow>
              ))}
            </ToggleList>
            <ExtraLabel>下钻附加字段</ExtraLabel>
          </FormCol>
          <TreeCol>
            <SourceSelect>cpu历史曲线<FaCaretDown size={13} color="#888" /></SourceSelect>
            <SectionRow>
              维度
              <SectionTools>
                <FaPencilAlt size={12} />
                <FaSyncAlt size={12} />
                <Search size={16} strokeWidth={1.6} color="#777" />
              </SectionTools>
            </SectionRow>
            <TreeRow $pl={2} $gap={5}>
              <FaChevronDown size={9} color="#3a8ee6" />
              <FaFolderOpen size={16} color="#3a8ee6" />
              cpu_csv
            </TreeRow>
            <TreeRow $pl={20} $gap={4}><TypeTag $c="#6d9bd8" $fs={10}>Str</TypeTag>Timestamp</TreeRow>
            <SectionTitle>度量</SectionTitle>
            <TreeRow $pl={2} $gap={5}>
              <FaChevronDown size={9} color="#39b79c" />
              <FaFolderOpen size={16} color="#39b79c" />
              cpu_csv
            </TreeRow>
            {[["0.5", "userg"], ["123", "niceg"], ["0.5", "systemg"], ["0.5", "waitg"], ["123", "stealg"], ["0.5", "sintrg"], ["0.5", "idleg"]].map((r) => (
              <TreeRow key={r[1]} $pl={20} $gap={r[0] === "123" ? 3 : 4}>
                <TypeTag $c="#4fb79c" $fs={r[0] === "123" ? 12 : 15} $ls={r[0] === "123" ? -0.8 : 0}>{r[0]}</TypeTag>{r[1]}
              </TreeRow>
            ))}
          </TreeCol>
        </PanelBody>
      </Panel>
      <Watermark>@稀土掘金技术社区</Watermark>
      <Highlight $l={1115} $t={65} $w={393} $h={417} />
    </Root>
  );
}
